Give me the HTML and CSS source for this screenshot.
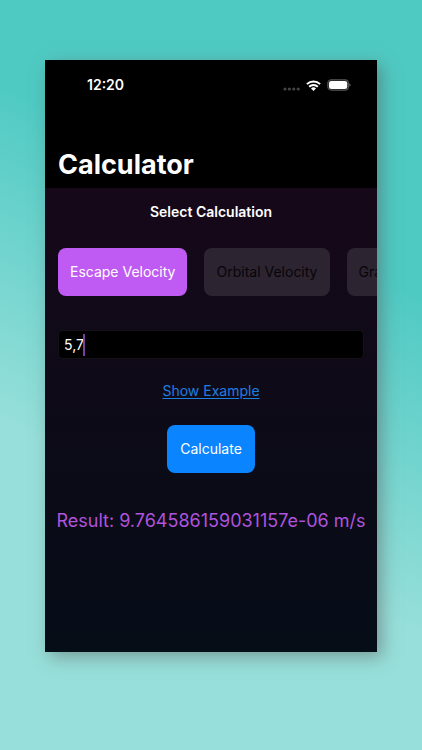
FILE: index.html
```html
<!DOCTYPE html>
<html lang="en">
<head>
<meta charset="utf-8">
<meta name="viewport" content="width=device-width, initial-scale=1">
<title>Calculator</title>
<link rel="stylesheet" href="styles.css">
</head>
<body>
<div class="phone">
  <header class="top">
    <div class="status">
      <time class="clock">12:20</time>
      <div class="indicators">
        <svg class="cell" viewBox="0 0 17 4" width="17" height="4" fill="#444" aria-hidden="true"><circle cx="2" cy="2" r="1.6"/><circle cx="6.4" cy="2" r="1.6"/><circle cx="10.8" cy="2" r="1.6"/><circle cx="15.2" cy="2" r="1.6"/></svg>
        <svg viewBox="0 0 15 11" width="15" height="11" fill="none" stroke="#fff" stroke-width="2" aria-hidden="true"><path d="M.9 4.1a9.5 9.5 0 0 1 13.2 0"/><path d="M3.2 6.7a6 6 0 0 1 8.6 0"/><path d="M7.5 11 5 8.5a3.5 3.5 0 0 1 5 0z" fill="#fff" stroke="none"/></svg>
        <svg viewBox="0 0 24 12" width="24" height="12" aria-hidden="true"><rect x=".8" y=".8" width="20.6" height="10.4" rx="3.4" fill="#222" stroke="#555" stroke-width="1.1"/><rect x="2" y="2" width="18.2" height="8" rx="2.3" fill="#fff"/><path d="M22.4 4.3q1.3.5 1.3 1.7t-1.3 1.7z" fill="#666"/></svg>
      </div>
    </div>
    <h1>Calculator</h1>
  </header>
  <main class="content">
    <h2>Select Calculation</h2>
    <div class="options">
      <button class="button selected" type="button" aria-pressed="true">Escape Velocity</button>
      <button class="button" type="button" aria-pressed="false">Orbital Velocity</button>
      <button class="button" type="button" aria-pressed="false">Gravity</button>
    </div>
    <div class="field">
      <input class="value" type="text" inputmode="decimal" value="5,7" aria-label="Value">
      <span class="caret"></span>
    </div>
    <a class="example" href="#">Show Example</a>
    <button class="button primary" type="button">Calculate</button>
    <output class="result">Result: 9.764586159031157e-06 m/s</output>
  </main>
</div>
</body>
</html>
```
FILE: styles.css
```css
* {
  box-sizing: border-box;
}

body {
  margin: 0;
  min-height: 100vh;
  padding: 60px 45px 98px;
  display: flex;
  background: linear-gradient(207deg, #4fcac3 31%, #97dfda 66%);
  font-family: Inter, "Liberation Sans", sans-serif;
  font-size: 14px;
  line-height: 20px;
  color: #fff;
}

.phone {
  flex: 1;
  min-width: 0;
  display: flex;
  flex-direction: column;
  background: #000;
  box-shadow: 5px 5px 16px rgba(90, 90, 90, 0.5);
}

.top {
  height: 128px;
  padding: 15px 13px 5px;
  display: flex;
  flex-direction: column;
  justify-content: space-between;
}

.status {
  display: flex;
  justify-content: space-between;
  align-items: center;
  padding: 0 13px 0 29px;
}

.clock {
  font-weight: 600;
}

.indicators {
  display: flex;
  align-items: center;
  gap: 6px;
}

.cell {
  margin-top: 8px;
}

h1,
h2 {
  margin: 0;
}

h1 {
  font-size: 27px;
  line-height: 36px;
  font-weight: 700;
}

h2 {
  font-size: 14px;
  line-height: 20px;
  font-weight: 600;
}

.content {
  flex: 1;
  padding: 14px 13px 28px;
  display: flex;
  flex-direction: column;
  align-items: center;
  overflow: hidden;
  background: linear-gradient(#160819, #050d17);
}

.options {
  align-self: stretch;
  margin: 26px -13px 0 0;
  display: flex;
  gap: 17px;
  overflow: hidden;
}

.button {
  flex: none;
  height: 48px;
  padding: 0 12px;
  border: 0;
  border-radius: 8px;
  background: #2c2430;
  color: #08050a;
  font: inherit;
}

.selected {
  background: #bf5af2;
  color: #fff;
}

.primary {
  padding: 0 13px;
  background: #0a84ff;
  color: #fff;
}

.field {
  position: relative;
  align-self: stretch;
  margin: 34px 0 22px;
}

.value {
  display: block;
  width: 100%;
  height: 29px;
  padding: 0 5px;
  border: 1px solid #141117;
  border-radius: 5px;
  background: #000;
  color: #fff;
  font: inherit;
}

.caret {
  position: absolute;
  left: 25px;
  top: 4px;
  width: 2px;
  height: 22px;
  background: #7c3f9f;
}

.example {
  margin-bottom: 24px;
  color: #1d7fe0;
  text-underline-offset: 2px;
}

.result {
  margin-top: 34px;
  font-size: 18px;
  line-height: 28px;
  color: #b053df;
  white-space: nowrap;
}
```
